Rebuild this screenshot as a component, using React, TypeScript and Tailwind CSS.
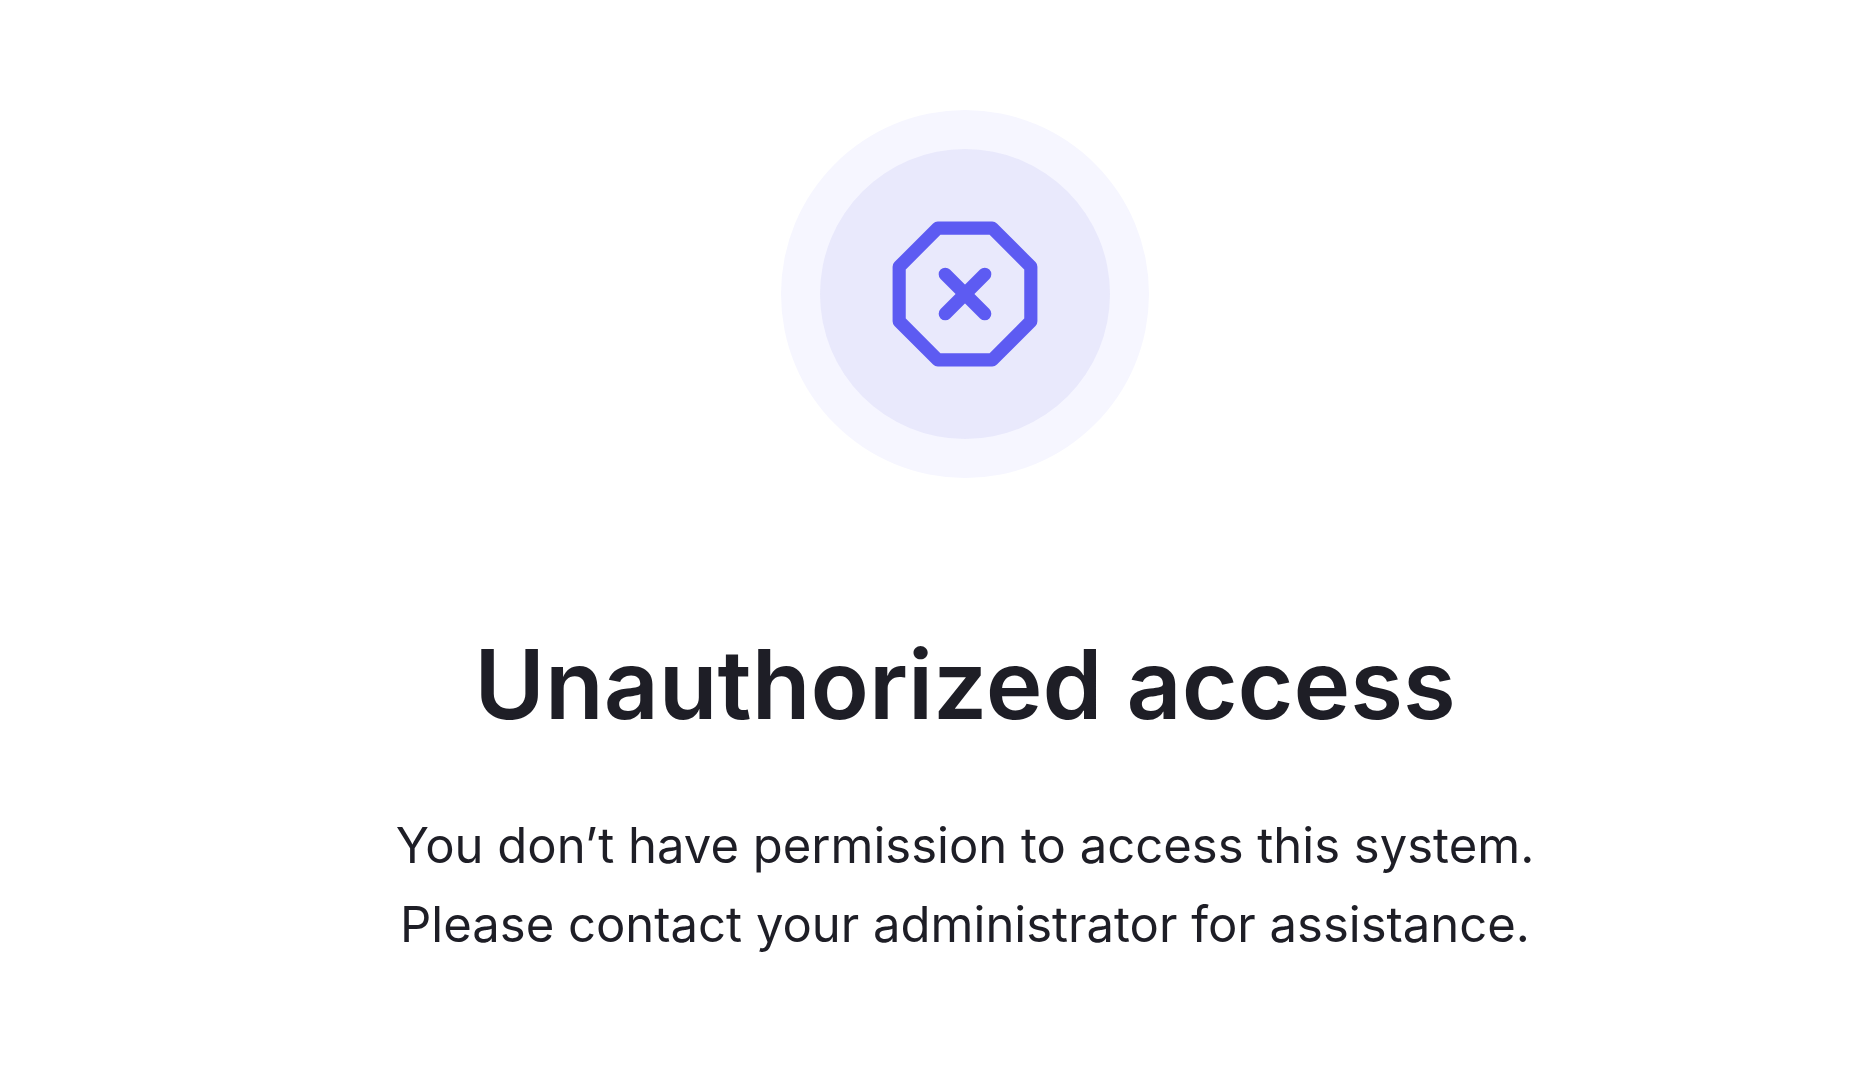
const StopIcon = () => (
    <svg
        className="size-[158px]"
        viewBox="0 0 24 24"
        fill="none"
        stroke="#5d5bf2"
        strokeWidth="2"
        strokeLinecap="round"
        strokeLinejoin="round"
        aria-hidden="true"
    >
        <path d="M7.86 2h8.28L22 7.86v8.28L16.14 22H7.86L2 16.14V7.86L7.86 2z" />
        <path d="m15 9-6 6" />
        <path d="m9 9 6 6" />
    </svg>
);

const App = () => {
    return (
        <main className="flex min-h-screen flex-col items-center bg-white pl-[74px] pt-[110px] text-center font-['Inter',sans-serif] text-[#1e1e26]">
            <div className="flex items-center justify-center rounded-full bg-[#f6f6ff] p-[39px]">
                <div className="flex size-[290px] items-center justify-center rounded-full bg-[#e9e9fc]">
                    <StopIcon />
                </div>
            </div>
            <h1 className="mt-[146px] text-[96px] font-semibold leading-[120px]">Unauthorized access</h1>
            <p className="mt-[62px] text-[49px] leading-[79px]">
                You don’t have permission to access this system.
                <br />
                Please contact your administrator for assistance.
            </p>
        </main>
    );
};

export default App;
